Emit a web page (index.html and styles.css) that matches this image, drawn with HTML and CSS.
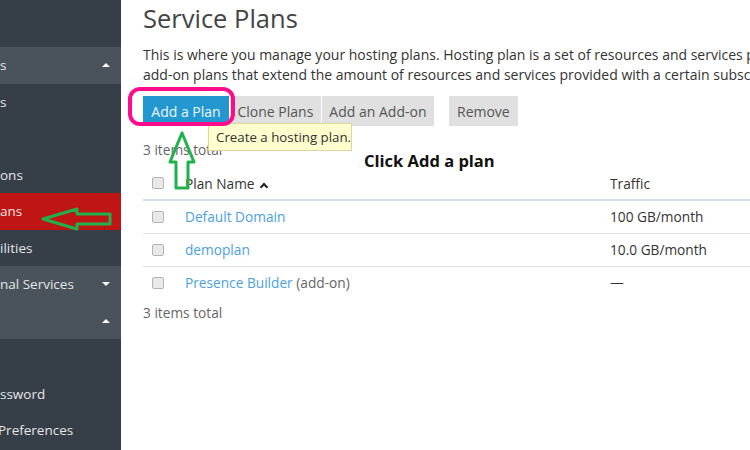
FILE: index.html
```html
<!DOCTYPE html>
<html lang="en">
<head>
    <meta charset="UTF-8">
    <title>Service Plans</title>
    <link rel="stylesheet" href="styles.css">
</head>
<body>
    <div class="page">
        <aside class="sidebar">
            <div class="nav-top"></div>
            <div class="nav-group">s <span class="caret up"></span></div>
            <div class="nav-item">s</div>
            <div class="nav-item"></div>
            <div class="nav-item">ons</div>
            <div class="nav-item active">ans</div>
            <div class="nav-item">ilities</div>
            <div class="nav-group">nal Services <span class="caret down"></span></div>
            <div class="nav-group"><span class="caret up"></span></div>
            <div class="nav-item"></div>
            <div class="nav-item">ssword</div>
            <div class="nav-item cut">Preferences</div>
        </aside>

        <main class="content">
            <h1>Service Plans</h1>
            <p class="intro">This is where you manage your hosting plans. Hosting plan is a set of resources and services provided to customers. You can also create<br>add-on plans that extend the amount of resources and services provided with a certain subscription.</p>

            <div class="toolbar">
                <button class="btn primary">Add a Plan</button>
                <div class="btn-group">
                    <button class="btn">Clone Plans</button>
                    <button class="btn">Add an Add-on</button>
                </div>
                <button class="btn">Remove</button>
                <div class="tooltip">Create a hosting plan.</div>
            </div>

            <div class="total">3 items total</div>

            <table class="plans">
                <thead>
                    <tr>
                        <th class="check"><span class="box"></span></th>
                        <th class="name">Plan Name <span class="sort"></span></th>
                        <th>Traffic</th>
                    </tr>
                </thead>
                <tbody>
                    <tr>
                        <td class="check"><span class="box"></span></td>
                        <td class="name"><a href="#">Default Domain</a></td>
                        <td>100 GB/month</td>
                    </tr>
                    <tr>
                        <td class="check"><span class="box"></span></td>
                        <td class="name"><a href="#">demoplan</a></td>
                        <td>10.0 GB/month</td>
                    </tr>
                    <tr>
                        <td class="check"><span class="box"></span></td>
                        <td class="name"><a href="#">Presence Builder</a> <span class="muted">(add-on)</span></td>
                        <td>&mdash;</td>
                    </tr>
                </tbody>
            </table>

            <div class="total bottom">3 items total</div>

            <div class="hint">Click Add a plan</div>
        </main>

        <!-- annotations drawn over the screenshot -->
        <svg class="marks" width="750" height="450" viewBox="0 0 750 450">
            <rect x="130" y="89" width="103" height="35" rx="10" fill="none" stroke="#ff0c8c" stroke-width="4"/>
            <polygon points="182,133 194,162 188,162 188,188 176,188 176,162 170,162" fill="none" stroke="#1fb14c" stroke-width="3" stroke-linejoin="round"/>
            <polygon points="43,219 77,209 77,214 110,214 110,224 77,224 77,229" fill="none" stroke="#1fb14c" stroke-width="3" stroke-linejoin="round"/>
        </svg>
    </div>
</body>
</html>
```

FILE: styles.css
```css
* {
    margin: 0;
    padding: 0;
    box-sizing: border-box;
}
body {
    background: #fff;
    font-family: "Open Sans", Arial, sans-serif;
    color: #333;
    font-size: 13.7px;
}
.page {
    position: relative;
    display: flex;
    width: 750px;
    height: 450px;
    overflow: hidden;
}
.sidebar {
    width: 121px;
    flex-shrink: 0;
    background: #363e47;
    color: #e4e6e8;
    font-size: 13.5px;
    overflow: hidden;
}
.nav-top {
    height: 47px;
}
.nav-item, .nav-group {
    height: 36.5px;
    display: flex;
    align-items: center;
    justify-content: space-between;
    padding-right: 11px;
    white-space: nowrap;
}
.nav-group {
    background: #4a535c;
}
.nav-item.active {
    background: #c01515;
}
.nav-item.cut {
    margin-left: -2px;
}
.caret {
    width: 0;
    height: 0;
    border-left: 4px solid transparent;
    border-right: 4px solid transparent;
    margin-left: auto;
}
.caret.up {
    border-bottom: 4px solid #fff;
}
.caret.down {
    border-top: 4px solid #fff;
}
.content {
    flex: 1;
    padding-left: 22px;
    overflow: hidden;
}
h1 {
    font-size: 25.5px;
    font-weight: normal;
    color: #444;
    line-height: 36px;
}
.intro {
    margin-top: 9px;
    line-height: 20px;
    white-space: nowrap;
    font-size: 14px;
}
.toolbar {
    position: relative;
    display: flex;
    margin-top: 11px;
    height: 30px;
}
.btn {
    font-family: inherit;
    font-size: 14px;
    color: #555;
    background: #e0e0e0;
    border: none;
    height: 30px;
    padding: 0 8px;
    white-space: nowrap;
}
.btn.primary {
    background: #2398d0;
    color: #eef6fb;
    width: 86px;
    padding: 0;
}
.btn-group {
    display: flex;
    gap: 1px;
    margin: 0 15px 0 1px;
}
.btn-group .btn {
    padding: 0 7.5px;
}
.tooltip {
    position: absolute;
    left: 65px;
    top: 27px;
    width: 144px;
    height: 28px;
    padding: 4px 7px;
    background: #fdfdcd;
    border: 1px solid #d9d6a0;
    color: #333;
    font-size: 13.3px;
    white-space: nowrap;
}
.total {
    color: #666;
    line-height: 20px;
    margin-top: 14px;
}
.total.bottom {
    margin-top: 4px;
}
.plans {
    width: 700px;
    border-collapse: collapse;
    margin-top: 7px;
}
.plans th {
    font-weight: normal;
    text-align: left;
    height: 33px;
    border-bottom: 2px solid #d7dee6;
}
.plans td {
    height: 33px;
    border-bottom: 1px solid #e0e0e0;
}
.plans tbody tr:last-child td {
    border-bottom: none;
}
.check {
    width: 42px;
    padding-left: 9px;
}
.name {
    width: 425px;
}
.box {
    display: block;
    width: 12px;
    height: 12px;
    border: 1px solid #b4b4b4;
    border-radius: 2px;
    background: #e9e9e9;
}
.sort {
    display: inline-block;
    width: 6px;
    height: 6px;
    border-left: 2px solid #222;
    border-top: 2px solid #222;
    transform: rotate(45deg);
    margin: 0 0 -1px 3px;
}
.plans a {
    color: #4c9fdf;
    text-decoration: none;
}
.muted {
    color: #666;
}
.hint {
    position: absolute;
    left: 364px;
    top: 149px;
    font-weight: bold;
    font-size: 16.5px;
    color: #111;
}
.marks {
    position: absolute;
    left: 0;
    top: 0;
    pointer-events: none;
}
```
